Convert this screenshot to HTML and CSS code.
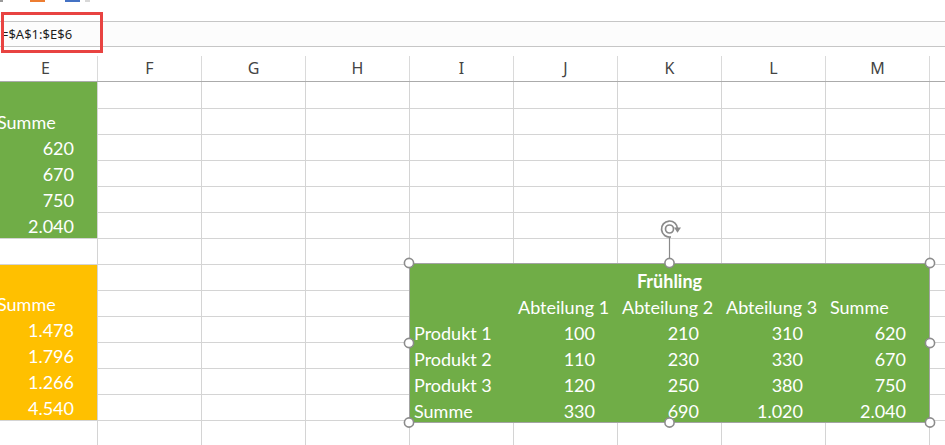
FILE: index.html
```html
<!DOCTYPE html>
<html lang="de">
<head>
<meta charset="utf-8">
<title>Frühling – verknüpftes Bild</title>
<link rel="stylesheet" href="styles.css">
</head>
<body>
<div class="ribbon-tail">
  <span class="stub stub-gray"></span>
  <span class="stub stub-orange"></span>
  <span class="stub stub-blue"></span>
  <span class="stub stub-light"></span>
</div>
<div class="formula-bar"><span class="formula">=$A$1:$E$6</span></div>

<div class="sheet">
  <div class="header-row">
    <div class="hcell">E</div><div class="hcell">F</div><div class="hcell">G</div><div class="hcell">H</div><div class="hcell">I</div><div class="hcell">J</div><div class="hcell">K</div><div class="hcell">L</div><div class="hcell">M</div><div class="hcell"></div>
  </div>
  <div class="row first"><div class="cell green"></div></div>
  <div class="row"><div class="cell green">Summe</div></div>
  <div class="row"><div class="cell green num">620</div></div>
  <div class="row"><div class="cell green num">670</div></div>
  <div class="row"><div class="cell green num">750</div></div>
  <div class="row"><div class="cell green num end">2.040</div></div>
  <div class="row"><div class="cell"></div></div>
  <div class="row"><div class="cell yellow"></div></div>
  <div class="row"><div class="cell yellow">Summe</div></div>
  <div class="row"><div class="cell yellow num">1.478</div></div>
  <div class="row"><div class="cell yellow num">1.796</div></div>
  <div class="row"><div class="cell yellow num">1.266</div></div>
  <div class="row"><div class="cell yellow num end">4.540</div></div>
  <div class="row"><div class="cell"></div></div>

  <div class="picture">
    <div class="pic-grid">
      <div class="pc title">Frühling</div>
      <div class="pc"></div><div class="pc">Abteilung 1</div><div class="pc">Abteilung 2</div><div class="pc">Abteilung 3</div><div class="pc">Summe</div>
      <div class="pc">Produkt 1</div><div class="pc num">100</div><div class="pc num">210</div><div class="pc num">310</div><div class="pc num">620</div>
      <div class="pc">Produkt 2</div><div class="pc num">110</div><div class="pc num">230</div><div class="pc num">330</div><div class="pc num">670</div>
      <div class="pc">Produkt 3</div><div class="pc num">120</div><div class="pc num">250</div><div class="pc num">380</div><div class="pc num">750</div>
      <div class="pc">Summe</div><div class="pc num">330</div><div class="pc num">690</div><div class="pc num">1.020</div><div class="pc num">2.040</div>
    </div>
  </div>

  <svg class="handles" width="540" height="215" viewBox="0 0 540 215">
    <g fill="none" stroke="#8a8a8a" stroke-width="1.7">
      <path d="M270.9 21.9 A8 8 0 1 1 277.5 14"/>
      <circle cx="269.5" cy="14" r="4"/>
      <line x1="269.5" y1="22.5" x2="269.5" y2="44" stroke-width="1.2"/>
    </g>
    <polygon points="274,12.4 281,12.4 277.5,17.8" fill="#8a8a8a"/>
    <g fill="#ffffff" stroke="#8c8c8c" stroke-width="1.6">
      <circle cx="9" cy="48" r="4.6"/>
      <circle cx="269.5" cy="48" r="4.6"/>
      <circle cx="530" cy="48" r="4.6"/>
      <circle cx="9" cy="128" r="4.6"/>
      <circle cx="530" cy="128" r="4.6"/>
      <circle cx="9" cy="207.5" r="4.6"/>
      <circle cx="269.5" cy="207.5" r="4.6"/>
      <circle cx="530" cy="207.5" r="4.6"/>
    </g>
  </svg>
</div>

<div class="highlight"></div>
</body>
</html>
```

FILE: styles.css
```css
* { box-sizing: border-box; }

html, body {
  margin: 0;
  padding: 0;
}

body {
  width: 945px;
  height: 445px;
  overflow: hidden;
  position: relative;
  background: #ffffff;
  font-family: "Lato", "Open Sans", sans-serif;
}

/* remnants of ribbon icons at the very top */
.ribbon-tail {
  height: 21px;
  display: flex;
  align-items: flex-start;
}
.stub {
  display: block;
  height: 2px;
  flex: none;
}
.stub-gray { width: 3px; background: #9a9a9a; }
.stub-orange { width: 15px; margin-left: 27px; background: #ed7d31; }
.stub-blue { width: 15px; margin-left: 20px; background: #4472c4; }
.stub-light { width: 5px; margin-left: 5px; background: #d8d8d8; }

/* formula bar */
.formula-bar {
  height: 26px;
  margin-bottom: 9px;
  border-top: 1px solid #c6c6c6;
  border-bottom: 1px solid #c6c6c6;
  background: #fcfcfc;
  display: flex;
  align-items: center;
  padding-left: 1px;
  font-family: "Noto Sans", "DejaVu Sans", sans-serif;
  font-size: 13px;
  color: #1e1e1e;
}

/* red annotation frame around the formula */
.highlight {
  position: absolute;
  left: 1px;
  top: 12px;
  width: 102px;
  height: 41px;
  border: 3px solid #e84341;
}

/* worksheet */
.sheet {
  position: relative;
  margin-left: -6px;
  width: 1040px;
}

.header-row {
  display: flex;
  height: 26px;
  border-bottom: 1px solid #ababab;
}
.hcell {
  flex: none;
  width: 104px;
  border-right: 1px solid #dadada;
  text-align: center;
  line-height: 25px;
  font-family: "Noto Sans", "DejaVu Sans", sans-serif;
  font-size: 16px;
  color: #444444;
}

.row {
  display: flex;
  height: 26px;
  border-bottom: 1px solid #d4d4d4;
  background-image: repeating-linear-gradient(to right, transparent 0 103px, #d4d4d4 103px 104px);
}
.row.first { height: 27px; }

.cell {
  flex: none;
  width: 103px;
  height: 26px;
  padding: 0 23px 0 3px;
  line-height: 26px;
  font-size: 18px;
  color: #ffffff;
  white-space: nowrap;
}
.row.first .cell { height: 27px; line-height: 27px; }
.cell.green { background: #70ad47; }
.cell.yellow { background: #ffc000; }
.cell.end { border-bottom: 1px solid #d4d4d4; }
.num { text-align: right; }

/* linked picture of A1:E6 */
.picture {
  position: absolute;
  left: 415px;
  top: 207px;
  width: 521px;
  height: 160px;
  border: 1px solid #a3a3a3;
  background: #70ad47;
  padding-top: 4px;
  overflow: hidden;
}
.pic-grid {
  display: grid;
  grid-template-columns: 104px 104px 104px 104px 103px;
  grid-auto-rows: 26px;
}
.pc {
  padding: 0 23px 0 4px;
  line-height: 26px;
  font-size: 18px;
  color: #ffffff;
  white-space: nowrap;
}
.pc.title {
  grid-column: 1 / -1;
  text-align: center;
  font-weight: 700;
  padding: 0;
}

/* selection handles + rotation handle */
.handles {
  position: absolute;
  left: 406px;
  top: 159px;
}
```
